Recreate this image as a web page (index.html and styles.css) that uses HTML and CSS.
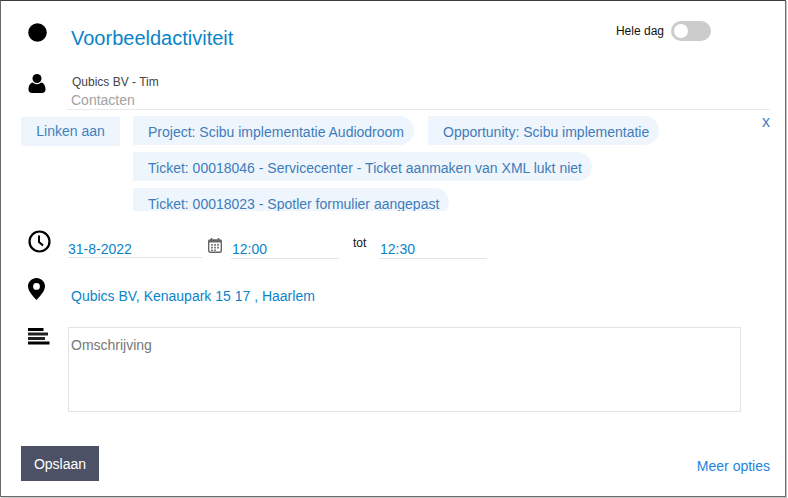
FILE: index.html
```html
<!DOCTYPE html>
<html lang="en">
<head>
    <meta charset="UTF-8">
    <title>Voorbeeldactiviteit</title>
    <link rel="stylesheet" href="styles.css">
</head>
<body>
    <div class="dialog">
        <!-- Title row -->
        <div class="row title-row">
            <div class="icon-cell">
                <svg class="icon" width="19" height="19" viewBox="0 0 19 19"><circle cx="9.500" cy="9.500" r="9.300" fill="#000"/></svg>
            </div>
            <div class="title">Voorbeeldactiviteit</div>
            <div class="all-day">
                <span class="all-day-label">Hele dag</span>
                <span class="toggle"><span class="toggle-knob"></span></span>
            </div>
        </div>

        <!-- Contact row -->
        <div class="row contact-row">
            <div class="icon-cell">
                <svg class="icon" width="18" height="19" viewBox="0 0 18 19"><circle cx="9" cy="4.500" r="4.500" fill="#000"/><path d="M0.500 15.500C0.500 11.500 2.500 8.500 5 8.500c1 1.200 2.500 1.700 4 1.700s3-.5 4-1.700c2.500 0 4.500 3 4.500 7 0 2.200-1.300 3.500-3.500 3.500H4c-2.200 0-3.500-1.300-3.500-3.500z" fill="#000"/></svg>
            </div>
            <div class="contact-info">
                <div class="contact-name">Qubics BV - Tim</div>
                <div class="contact-label">Contacten</div>
            </div>
        </div>

        <!-- Linked items -->
        <div class="row link-row">
            <div class="link-button">Linken aan</div>
            <div class="chips">
                <span class="chip">Project: Scibu implementatie Audiodroom</span>
                <span class="chip">Opportunity: Scibu implementatie</span>
                <span class="chip">Ticket: 00018046 - Servicecenter - Ticket aanmaken van XML lukt niet</span>
                <span class="chip">Ticket: 00018023 - Spotler formulier aangepast</span>
            </div>
            <a href="#" class="close-link">x</a>
        </div>

        <!-- Date and time -->
        <div class="row date-row">
            <div class="icon-cell">
                <svg class="icon" width="23" height="23" viewBox="0 0 23 23"><circle cx="11.500" cy="11.500" r="10" fill="none" stroke="#000" stroke-width="2.200"/><path d="M11 5.500v6.500l4 3.500" fill="none" stroke="#000" stroke-width="2"/></svg>
            </div>
            <div class="field date-field">31-8-2022</div>
            <svg class="calendar" width="14" height="15" viewBox="0 0 14 15"><rect x="0.700" y="2" width="12.600" height="12.300" rx="1.500" fill="none" stroke="#666" stroke-width="1.400"/><rect x="0.700" y="2" width="12.600" height="2.500" fill="#666"/><path d="M3.500 0v3M10.500 0v3" stroke="#666" stroke-width="1.500"/><path d="M3 6h2v1.800H3zM6 6h2v1.800H6zM9 6h2v1.800H9zM3 8.800h2v1.800H3zM6 8.800h2v1.800H6zM9 8.800h2v1.800H9zM3 11.500h2v1.500H3zM6 11.500h2v1.500H6z" fill="#808080"/></svg>
            <div class="field time-field">12:00</div>
            <div class="until">tot</div>
            <div class="field time-field">12:30</div>
        </div>

        <!-- Location -->
        <div class="row location-row">
            <div class="icon-cell">
                <svg class="icon" width="17" height="22" viewBox="0 0 17 22"><path fill-rule="evenodd" d="M8.500 0C3.800 0 0 3.700 0 8.300 0 13 5 18.500 8.500 22 12 18.500 17 13 17 8.300 17 3.700 13.200 0 8.500 0zm0 5a3.400 3.400 0 1 1 0 6.800 3.400 3.400 0 0 1 0-6.800z" fill="#000"/></svg>
            </div>
            <div class="location">Qubics BV, Kenaupark 15 17 , Haarlem</div>
        </div>

        <!-- Description -->
        <div class="row description-row">
            <div class="icon-cell">
                <svg class="icon lines" width="22" height="17" viewBox="0 0 22 17"><path d="M0 1.500h15.500" stroke="#000" stroke-width="3"/><path d="M0 6h20" stroke="#222" stroke-width="3"/><path d="M0 10.500h17" stroke="#222" stroke-width="3"/><path d="M0 15h21.500" stroke="#000" stroke-width="3"/></svg>
            </div>
            <div class="description">Omschrijving</div>
        </div>

        <!-- Footer -->
        <div class="footer">
            <button class="save-button">Opslaan</button>
            <a href="#" class="more-link">Meer opties</a>
        </div>
    </div>
</body>
</html>
```

FILE: styles.css
```css
/* Basic reset */
* {
    margin: 0;
    padding: 0;
    box-sizing: border-box;
}

html, body {
    height: 100%;
    overflow: hidden;
    background-color: #fff;
}

body {
    font-family: 'Liberation Sans', Arial, sans-serif;
    font-size: 14px;
}

/* Dialog frame */
.dialog {
    width: 786px;
    height: 497px;
    border: 1px solid #6b6b6b;
    border-top: 1px solid #3c3c3c;
    box-shadow: 1px 1px 0 #c8c8c8;
    padding: 0 15px 15px 20px;
    display: flex;
    flex-direction: column;
}

.row {
    display: flex;
    align-items: flex-start;
}

.icon-cell {
    width: 47px;
    padding-left: 7px;
    flex-shrink: 0;
}

.icon {
    display: block;
}

/* Title row */
.title-row {
    margin-top: 18px;
    height: 36px;
}

.title-row .icon {
    margin-top: 4px;
}

.title {
    margin-left: 3px;
    padding-top: 1px;
    font-size: 20px;
    line-height: 36px;
    color: #0a84c9;
}

.all-day {
    margin-left: auto;
    margin-right: 59px;
    margin-top: 2px;
    display: flex;
    align-items: center;
    gap: 7px;
}

.all-day-label {
    font-size: 12px;
    color: #111;
}

.toggle {
    display: block;
    width: 40px;
    height: 20px;
    border-radius: 10px;
    background-color: #ccc;
    padding: 3px;
}

.toggle-knob {
    display: block;
    width: 14px;
    height: 14px;
    border-radius: 50%;
    background-color: #fff;
}

/* Contact row */
.contact-row {
    margin-top: 19px;
}

.contact-info {
    flex: 1;
    border-bottom: 1px solid #e9e9e9;
    padding-left: 4px;
    margin-left: -1px;
    height: 36px;
}

.contact-name {
    font-size: 12px;
    line-height: 16px;
    color: #444;
    padding-left: 1px;
}

.contact-label {
    margin-top: 1px;
    font-size: 14px;
    line-height: 19px;
    color: #a3a3a3;
}

/* Linked items */
.link-row {
    margin-top: 6px;
}

.link-button {
    width: 99px;
    height: 29px;
    margin-top: 1px;
    margin-right: 13px;
    text-align: center;
    line-height: 28px;
    font-size: 14px;
    color: #3f82c0;
    background-color: #eef5fc;
    flex-shrink: 0;
}

.chips {
    width: 600px;
    height: 95px;
    overflow: hidden;
    display: flex;
    flex-wrap: wrap;
    align-content: flex-start;
    gap: 7px 14px;
}

.chip {
    height: 29px;
    padding: 0 10px 0 15px;
    line-height: 32px;
    font-size: 14px;
    color: #3f7cba;
    background-color: #eef5fc;
    border-radius: 0 15px 15px 0;
    white-space: nowrap;
}

.close-link {
    margin-left: auto;
    margin-top: -3px;
    font-size: 16px;
    line-height: 18px;
    color: #3f82c0;
    text-decoration: none;
}

/* Date and time */
.date-row {
    margin-top: 19px;
    height: 29px;
}

.field {
    height: 19px;
    margin-top: 10px;
    line-height: 18px;
    font-size: 14px;
    color: #0a84c9;
    border-bottom: 1px solid #e3e3e3;
}

.date-field {
    width: 134px;
    height: 18px;
}

.time-field {
    width: 108px;
    padding-left: 1px;
}

.calendar {
    margin: 8px 9px 0 6px;
    display: block;
    flex-shrink: 0;
}

.until {
    width: 40px;
    padding-left: 14px;
    margin-top: 6px;
    font-size: 12px;
    line-height: 14px;
    color: #111;
}

/* Location */
.location-row {
    margin-top: 19px;
}

.location {
    margin-left: 3px;
    margin-top: 9px;
    line-height: 18px;
    font-size: 14px;
    color: #0a84c9;
}

/* Description */
.description-row {
    margin-top: 22px;
}

.description-row .icon {
    margin-top: 1px;
}

.description {
    width: 673px;
    height: 85px;
    border: 1px solid #e3e3e3;
    padding: 9px 2px;
    line-height: 16px;
    font-size: 14px;
    color: #777;
}

/* Footer */
.footer {
    margin-top: auto;
    display: flex;
    justify-content: space-between;
    align-items: flex-end;
}

.save-button {
    width: 78px;
    height: 35px;
    border: none;
    font-family: inherit;
    font-size: 14px;
    color: #fff;
    background-color: #4d5165;
}

.more-link {
    margin-bottom: 6px;
    font-size: 14px;
    line-height: 17px;
    color: #1a86dc;
    text-decoration: none;
}
```
